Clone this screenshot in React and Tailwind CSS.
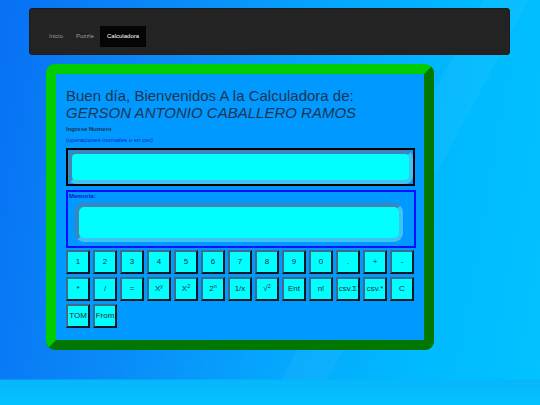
import React from "react";

function Key({ children }) {
  return (
    <button
      type="button"
      className="h-[24px] w-[24px] shrink-0 overflow-hidden whitespace-nowrap border-2 border-t-[#3f6a8a] border-l-[#3f6a8a] border-r-[#0d1722] border-b-[#0d1722] bg-[#00ffff] px-0 text-center text-[8px] leading-[20px] text-[#1f2d3b]"
    >
      {children}
    </button>
  );
}

const Sup = ({ children }) => (
  <sup className="text-[5.5px]">{children}</sup>
);

export default function App() {
  const row1 = ["1", "2", "3", "4", "5", "6", "7", "8", "9", "0", ".", "+", "-"];
  const row2 = [
    "*",
    "/",
    "=",
    <>X<Sup>y</Sup></>,
    <>X<Sup>2</Sup></>,
    <>2<Sup>n</Sup></>,
    "1/x",
    <>√<Sup>2</Sup></>,
    "Ent",
    "n!",
    "csv.Σ",
    "csv.*",
    "C",
  ];
  const row3 = ["TOM", "From"];

  return (
    <div
      className="min-h-screen w-full overflow-hidden bg-[linear-gradient(to_bottom,transparent_379px,#06b6fb_380px,#03c2ff_405px),linear-gradient(118deg,transparent_64%,rgba(255,255,255,0.035)_64%,rgba(255,255,255,0.035)_70%,transparent_70%),linear-gradient(100deg,#0870f4_0%,#0a8cf8_30%,#05a6fd_55%,#00bbff_80%,#02c2ff_100%)] pt-[8px] font-['Liberation_Sans',Arial,sans-serif]"
    >
      {/* Navbar */}
      <nav className="ml-[29px] flex h-[47px] w-[481px] items-end rounded-[3px] border border-[#1a1a1a] bg-[#232323] pb-[7px] pl-[12px]">
        <a className="px-[7px] py-[7px] text-[6px] leading-[7px] text-[#9b9b9b]">Inicio</a>
        <a className="px-[6px] py-[7px] text-[6px] leading-[7px] text-[#9b9b9b]">Puzzle</a>
        <a className="bg-[#050505] px-[7px] py-[7px] text-[6px] leading-[7px] text-white">Calculadora</a>
      </nav>

      {/* Calculator card */}
      <div className="ml-[46px] mt-[9px] w-[388px] rounded-[9px] border-[10px] border-t-[#00cc00] border-l-[#00cc00] border-r-[#007700] border-b-[#007700] bg-[#0099ff] pb-[12px] pl-[10px] pt-[13px]">
        <h1 className="text-[15px] leading-[17px] font-normal text-[#1c3553]">
          Buen día, Bienvenidos A la Calculadora de:
          <br />
          <i>GERSON ANTONIO CABALLERO RAMOS</i>
        </h1>
        <p className="mt-[5px] text-[6px] leading-[7px] font-bold text-[#1c3553]">Ingrese Numero</p>
        <p className="mt-[4px] text-[6px] leading-[7px] text-[#0a1fd0]">(operaciones normales o en csv)</p>

        <div className="mt-[4px] w-[349px] border-2 border-black">
          <div className="h-[34px] rounded-[8px] border-4 border-t-[#3b86bb] border-l-[#3b86bb] border-r-[#3fc2f4] border-b-[#3fc2f4] bg-[#00ffff]" />
        </div>

        <div className="mt-[4px] w-[350px] border-2 border-[#0a10ff] pb-[4px]">
          <p className="pl-[1px] text-[6px] leading-[8px] font-bold text-[#0a10d8]">Memoria:</p>
          <div className="ml-[7px] mt-[3px] h-[39px] w-[328px] rounded-[9px] border-4 border-t-[#3b86bb] border-l-[#3b86bb] border-r-[#3fc2f4] border-b-[#3fc2f4] bg-[#00ffff]" />
        </div>

        <div className="mt-[2px] flex flex-col gap-[3px]">
          <div className="flex gap-[3px]">
            {row1.map((k, i) => (
              <Key key={i}>{k}</Key>
            ))}
          </div>
          <div className="flex gap-[3px]">
            {row2.map((k, i) => (
              <Key key={i}>{k}</Key>
            ))}
          </div>
          <div className="flex gap-[3px]">
            {row3.map((k, i) => (
              <Key key={i}>{k}</Key>
            ))}
          </div>
        </div>
      </div>
    </div>
  );
}
